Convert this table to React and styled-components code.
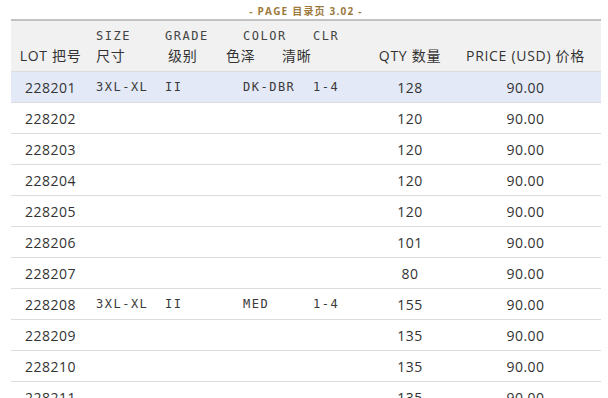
import React from 'react';
import styled, { createGlobalStyle } from 'styled-components';

const Global = createGlobalStyle`
body{
    margin:0;
    background:#fff;
    font-family:"Open Sans","Noto Sans CJK SC",sans-serif;
    color:#333;
}
`

const rows = [
    { lot: '228201', size: '3XL-XL', grade: 'II', color: 'DK-DBR', clr: '1-4', qty: 128, price: '90.00', active: true },
    { lot: '228202', qty: 120, price: '90.00' },
    { lot: '228203', qty: 120, price: '90.00' },
    { lot: '228204', qty: 120, price: '90.00' },
    { lot: '228205', qty: 120, price: '90.00' },
    { lot: '228206', qty: 101, price: '90.00' },
    { lot: '228207', qty: 80, price: '90.00' },
    { lot: '228208', size: '3XL-XL', grade: 'II', color: 'MED', clr: '1-4', qty: 155, price: '90.00' },
    { lot: '228209', qty: 135, price: '90.00' },
    { lot: '228210', qty: 135, price: '90.00' },
    { lot: '228211', qty: 135, price: '90.00' },
]

export default function App(){
    return(
        <Page>
        <Global/>
        <Title>- PAGE 目录页 3.02 -</Title>
        <Table>
            <Head>
                <HCell center><Top/><Cn>LOT 把号</Cn></HCell>
                <HCell><Top>SIZE</Top><Cn>尺寸</Cn></HCell>
                <HCell><Top>GRADE</Top><Cn shift={3}>级别</Cn></HCell>
                <HCell><Top>COLOR</Top><Cn shift={-17}>色泽</Cn></HCell>
                <HCell><Top>CLR</Top><Cn shift={-31}>清晰</Cn></HCell>
                <HCell center><Top/><Cn>QTY 数量</Cn></HCell>
                <HCell center><Top/><Cn>PRICE (USD) 价格</Cn></HCell>
            </Head>
            {rows.map(r=>(
                <Row key={r.lot} active={r.active}>
                    <Cell center>{r.lot}</Cell>
                    <Mono>{r.size}</Mono>
                    <Mono>{r.grade}</Mono>
                    <Mono>{r.color}</Mono>
                    <Mono>{r.clr}</Mono>
                    <Cell center>{r.qty}</Cell>
                    <Cell center>{r.price}</Cell>
                </Row>
            ))}
        </Table>
        </Page>
    )
}

const cols = '79px 69px 78px 70px 63px 80px 1fr'

const Page = styled.div`
padding:0 7px 0 11px;
height:398px;
overflow:hidden;
`
const Title = styled.div`
padding-top:4px;
height:15px;
line-height:15px;
text-align:center;
font-size:10px;
font-weight:700;
letter-spacing:1.2px;
color:#9d7a3e;
`
const Table = styled.div`
border-top:2px solid #c2c2c2;
`
const Head = styled.div`
display:grid;
grid-template-columns:${cols};
height:50px;
background:#f1f1f1;
border-bottom:1px solid #dcdcdc;
`
const HCell = styled.div`
padding:6px 6px 0;
text-align:${p=>p.center ? 'center' : 'left'};
white-space:nowrap;
`
const Top = styled.div`
height:18px;
line-height:18px;
font-family:"DejaVu Sans Mono",monospace;
font-size:12px;
letter-spacing:1.5px;
color:#444;
`
const Cn = styled.div`
line-height:22px;
font-size:14px;
letter-spacing:0.7px;
margin-left:${p=>p.shift || 0}px;
color:#333;
`
const Row = styled.div`
display:grid;
grid-template-columns:${cols};
height:30px;
align-items:center;
border-bottom:1px solid #dcdcdc;
background:${p=>p.active ? '#e4e9f7' : '#fff'};
`
const Cell = styled.div`
padding:0 6px;
font-size:14px;
letter-spacing:0.5px;
text-align:${p=>p.center ? 'center' : 'left'};
`
const Mono = styled.div`
padding:0 6px;
font-family:"DejaVu Sans Mono",monospace;
font-size:12px;
letter-spacing:1.5px;
color:#3a3a3a;
white-space:nowrap;
`
